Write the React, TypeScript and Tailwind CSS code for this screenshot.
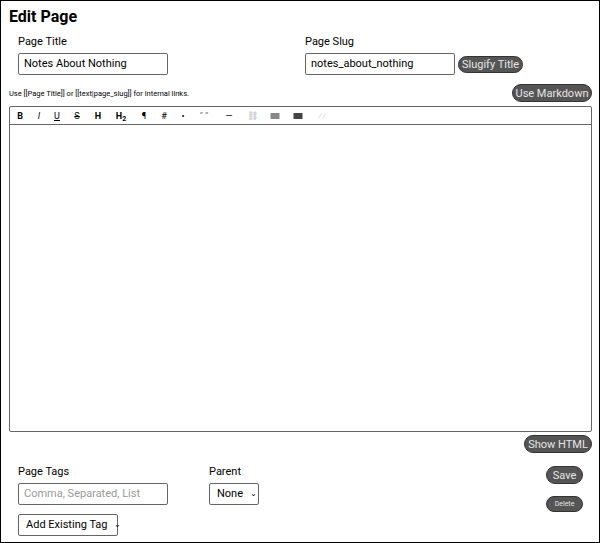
export default function App() {
  const f = { fontFamily: "Roboto, 'Noto Sans', sans-serif" };
  const btn = "rounded-full bg-[#555] text-[#e5e5e5] border border-[#333] leading-none whitespace-nowrap";
  const t = "absolute top-0 -translate-x-1/2";
  return (
    <div style={f} className="w-[600px] h-[543px] border border-black bg-white text-black relative">
      <h1 className="absolute left-[8px] top-[4px] text-[16px] font-bold">Edit Page</h1>
      <div className="absolute left-[17px] top-[33px] text-[11px]">Page Title</div>
      <div className="absolute left-[17px] top-[52px] w-[150px] h-[22px] border border-[#666] rounded-[2px] text-[11px] pl-[5px] flex items-center">Notes About Nothing</div>
      <div className="absolute left-[304px] top-[33px] text-[11px]">Page Slug</div>
      <div className="absolute left-[304px] top-[52px] w-[150px] h-[22px] border border-[#666] rounded-[2px] text-[11px] pl-[5px] flex items-center">notes_about_nothing</div>
      <button className={"absolute left-[457px] top-[55px] w-[65px] h-[17px] text-[11px] " + btn}>Slugify Title</button>
      <div className="absolute left-[8px] top-[87px] text-[7.5px] whitespace-nowrap">Use [[Page Title]] or [[text|page_slug]] for internal links.</div>
      <button className={"absolute left-[511px] top-[83px] w-[80px] h-[18px] text-[11px] " + btn}>Use Markdown</button>
      <div className="absolute left-[8px] top-[105px] w-[583px] h-[326px] border border-[#666] rounded-[2px]">
        <div className="h-[18px] border-b border-[#666] relative text-[9px] leading-[18px]">
          <span style={{ left: 10 }} className={t + " font-bold"}>B</span>
          <span style={{ left: 29 }} className={t + " italic"}>I</span>
          <span style={{ left: 47 }} className={t + " underline"}>U</span>
          <span style={{ left: 67 }} className={t + " line-through"}>S</span>
          <span style={{ left: 88 }} className={t + " font-bold"}>H</span>
          <span style={{ left: 111 }} className={t + " font-bold"}>H<sub className="text-[7px]">2</sub></span>
          <span style={{ left: 134 }} className={t}>¶</span>
          <span style={{ left: 154 }} className={t}>#</span>
          <span style={{ left: 173 }} className={t}>•</span>
          <span style={{ left: 194 }} className={t + " text-[#888]"}>“ ”</span>
          <span style={{ left: 219 }} className={t}>—</span>
          <span style={{ left: 242 }} className={t + " text-[#aaa]"}>⛓︎</span>
          <span style={{ left: 265 }} className={t}><span className="inline-block w-[9px] h-[6px] bg-[#888]" /></span>
          <span style={{ left: 288 }} className={t}><span className="inline-block w-[9px] h-[6px] bg-[#444]" /></span>
          <span style={{ left: 312 }} className={t + " text-[#ccc]"}>⁄⁄</span>
        </div>
      </div>
      <button className={"absolute left-[523px] top-[434px] w-[68px] h-[18px] text-[11px] " + btn}>Show HTML</button>
      <div className="absolute left-[17px] top-[463px] text-[11px]">Page Tags</div>
      <div className="absolute left-[17px] top-[482px] w-[150px] h-[22px] border border-[#666] rounded-[2px] text-[11px] pl-[5px] flex items-center text-[#999]">Comma, Separated, List</div>
      <div className="absolute left-[208px] top-[463px] text-[11px]">Parent</div>
      <div className="absolute left-[208px] top-[482px] w-[50px] h-[22px] border border-[#666] rounded-[2px] text-[11px] pl-[7px] flex items-center gap-[7px]">None <span className="text-[8px]">⌄</span></div>
      <button className={"absolute left-[545px] top-[465px] w-[37px] h-[18px] text-[11px] " + btn}>Save</button>
      <button className={"absolute left-[545px] top-[495px] w-[37px] h-[16px] text-[7px] " + btn}>Delete</button>
      <div className="absolute left-[17px] top-[513px] w-[100px] h-[22px] border border-[#666] rounded-[2px] text-[11px] pl-[7px] flex items-center gap-[6px] whitespace-nowrap">Add Existing Tag <span className="text-[8px]">⌄</span></div>
    </div>
  );
}
